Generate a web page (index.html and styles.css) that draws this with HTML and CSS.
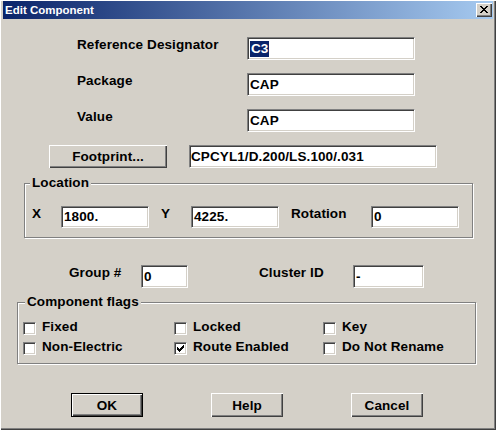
FILE: index.html
```html
<!DOCTYPE html>
<html>
<head>
<meta charset="utf-8">
<link rel="stylesheet" href="styles.css">
</head>
<body>
<div class="window">
  <div class="titlebar">
    <span class="title">Edit Component</span>
    <span class="close"><svg width="8" height="7" viewBox="0 0 8 7" shape-rendering="crispEdges"><path fill="#000" d="M0 0h2v1h-2z M6 0h2v1h-2z M1 1h2v1h-2z M5 1h2v1h-2z M2 2h4v1h-4z M3 3h2v1h-2z M2 4h4v1h-4z M1 5h2v1h-2z M5 5h2v1h-2z M0 6h2v1h-2z M6 6h2v1h-2z"/></svg></span>
  </div>
  <div class="content">
    <div class="row top-row first">
      <span class="lbl lbl-top">Reference Designator</span>
      <div class="field f-top"><span class="sel">C3</span></div>
    </div>
    <div class="row top-row">
      <span class="lbl lbl-top">Package</span>
      <div class="field f-top">CAP</div>
    </div>
    <div class="row top-row">
      <span class="lbl lbl-top">Value</span>
      <div class="field f-top">CAP</div>
    </div>
    <div class="row fp-row">
      <div class="btn fp-btn">Footprint...</div>
      <div class="field f-fp">CPCYL1/D.200/LS.100/.031</div>
    </div>
    <fieldset class="group loc">
      <legend>Location</legend>
      <div class="row loc-row">
        <span class="lbl l-x">X</span>
        <div class="field f-loc">1800.</div>
        <span class="lbl l-y">Y</span>
        <div class="field f-loc">4225.</div>
        <span class="lbl l-rot">Rotation</span>
        <div class="field f-loc">0</div>
      </div>
    </fieldset>
    <div class="row grp-row">
      <span class="lbl l-grp">Group #</span>
      <div class="field f-grp">0</div>
      <span class="lbl l-cl">Cluster ID</span>
      <div class="field f-cl">-</div>
    </div>
    <fieldset class="group flags">
      <legend>Component flags</legend>
      <div class="checks">
        <div class="chk"><span class="cb"></span><span class="ct">Fixed</span></div>
        <div class="chk"><span class="cb"></span><span class="ct">Locked</span></div>
        <div class="chk"><span class="cb"></span><span class="ct">Key</span></div>
        <div class="chk"><span class="cb"></span><span class="ct">Non-Electric</span></div>
        <div class="chk"><span class="cb"><svg width="7" height="7" viewBox="0 0 7 7" shape-rendering="crispEdges"><path fill="#000" d="M6 0h1v1h-1z M5 1h2v1h-2z M0 2h1v1h-1z M4 2h3v1h-3z M0 3h2v1h-2z M3 3h3v1h-3z M0 4h5v1h-5z M1 5h3v1h-3z M2 6h1v1h-1z"/></svg></span><span class="ct">Route Enabled</span></div>
        <div class="chk"><span class="cb"></span><span class="ct">Do Not Rename</span></div>
      </div>
    </fieldset>
    <div class="row btn-row">
      <div class="btn dlg-btn default">OK</div>
      <div class="btn dlg-btn">Help</div>
      <div class="btn dlg-btn">Cancel</div>
    </div>
  </div>
</div>
</body>
</html>
```
FILE: styles.css
```css
html, body {
  margin: 0;
  padding: 0;
  background: #d4d0c8;
}
body {
  font-family: "Liberation Sans", Arial, sans-serif;
  font-weight: bold;
  font-size: 13.5px;
  letter-spacing: 0.1px;
  color: #000;
}
.window {
  width: 496px;
  height: 430px;
  box-sizing: border-box;
  padding: 1px 3px 3px 3px;
  background: #d4d0c8;
  box-shadow: inset 1px 1px 0 #ffffff, inset -1px -1px 0 #404040, inset -2px -2px 0 #808080;
}
.titlebar {
  height: 18px;
  display: flex;
  align-items: center;
  padding-left: 2px;
  background: linear-gradient(to right, #0a246a, #a6caf0);
  color: #fff;
}
.title {
  font-size: 11.5px;
  letter-spacing: 0;
  line-height: 18px;
}
.close {
  margin-left: auto;
  margin-right: 1px;
  width: 16px;
  height: 14px;
  box-sizing: border-box;
  background: #d4d0c8;
  box-shadow: inset 1px 1px 0 #fff, inset -1px -1px 0 #404040, inset -2px -2px 0 #808080;
  display: flex;
  align-items: center;
  justify-content: center;
  padding: 0 1px 1px 0;
}
.close svg { display: block; }
.content {
  padding-top: 18px;
}
.row {
  display: flex;
  align-items: flex-start;
}
.lbl {
  line-height: 16px;
  white-space: nowrap;
}
.field {
  box-sizing: border-box;
  height: 23px;
  background: #fff;
  border: 1px solid;
  border-color: #808080 #fff #fff #808080;
  box-shadow: inset 1px 1px 0 #404040, inset -1px -1px 0 #d4d0c8;
  display: flex;
  align-items: center;
  padding-left: 2px;
  white-space: nowrap;
  overflow: hidden;
  line-height: 16px;
}
.sel {
  background: #0a246a;
  color: #fff;
  padding: 0 1px 0 1px;
  line-height: 16px;
}
.top-row { margin-top: 13px; margin-left: 74px; }
.top-row.first { margin-top: 0; }
.lbl-top { width: 170px; }
.f-top { width: 168px; }
.fp-row { margin-top: 13px; margin-left: 46px; }
.btn {
  box-sizing: border-box;
  background: #d4d0c8;
  box-shadow: inset 1px 1px 0 #fff, inset -1px -1px 0 #404040, inset -2px -2px 0 #808080;
  display: flex;
  align-items: center;
  justify-content: center;
  white-space: nowrap;
}
.fp-btn { width: 118px; height: 23px; }
.f-fp { width: 248px; margin-left: 22px; padding-left: 1px; }

.group {
  margin: 0;
  padding: 0;
  min-inline-size: 0;
  box-sizing: border-box;
  border: 1px solid #808080;
  box-shadow: inset 1px 1px 0 #fff, 1px 1px 0 #fff;
}
.group legend {
  padding: 0 2px;
  line-height: 16px;
  background: #d4d0c8;
}
.loc {
  margin: 7px 0 0 21px;
  width: 449px;
  padding-bottom: 9px;
}
.loc legend { margin-left: 5px; }
.loc-row { margin-top: 15px; margin-left: 7px; }
.f-loc { width: 88px; height: 22px; }
.l-x { width: 29px; }
.l-y { width: 30px; margin-left: 12px; }
.l-rot { width: 80px; margin-left: 12px; }

.grp-row { margin-top: 27px; margin-left: 66px; }
.l-grp { width: 72px; }
.f-grp { width: 47px; }
.l-cl { width: 94px; margin-left: 71px; }
.f-cl { width: 71px; }

.flags {
  margin: 6px 0 0 14px;
  width: 459px;
  padding-bottom: 5px;
}
.flags legend { margin-left: 7px; }
.checks {
  margin: 8px 0 0 5px;
  display: grid;
  grid-template-columns: 151px 149px auto;
  grid-auto-rows: 20px;
}
.chk {
  display: flex;
  align-items: center;
  gap: 6px;
}
.cb {
  width: 13px;
  height: 13px;
  box-sizing: border-box;
  background: #fff;
  border: 1px solid;
  border-color: #808080 #fff #fff #808080;
  box-shadow: inset 1px 1px 0 #404040, inset -1px -1px 0 #d4d0c8;
  display: flex;
  align-items: center;
  justify-content: center;
  flex: none;
}
.cb svg { display: block; }
.ct {
  line-height: 16px;
  margin-bottom: 3px;
}

.btn-row { margin-top: 29px; margin-left: 68px; gap: 68px; }
.dlg-btn { width: 72px; height: 24px; }
.default {
  border: 1px solid #000;
}
```
